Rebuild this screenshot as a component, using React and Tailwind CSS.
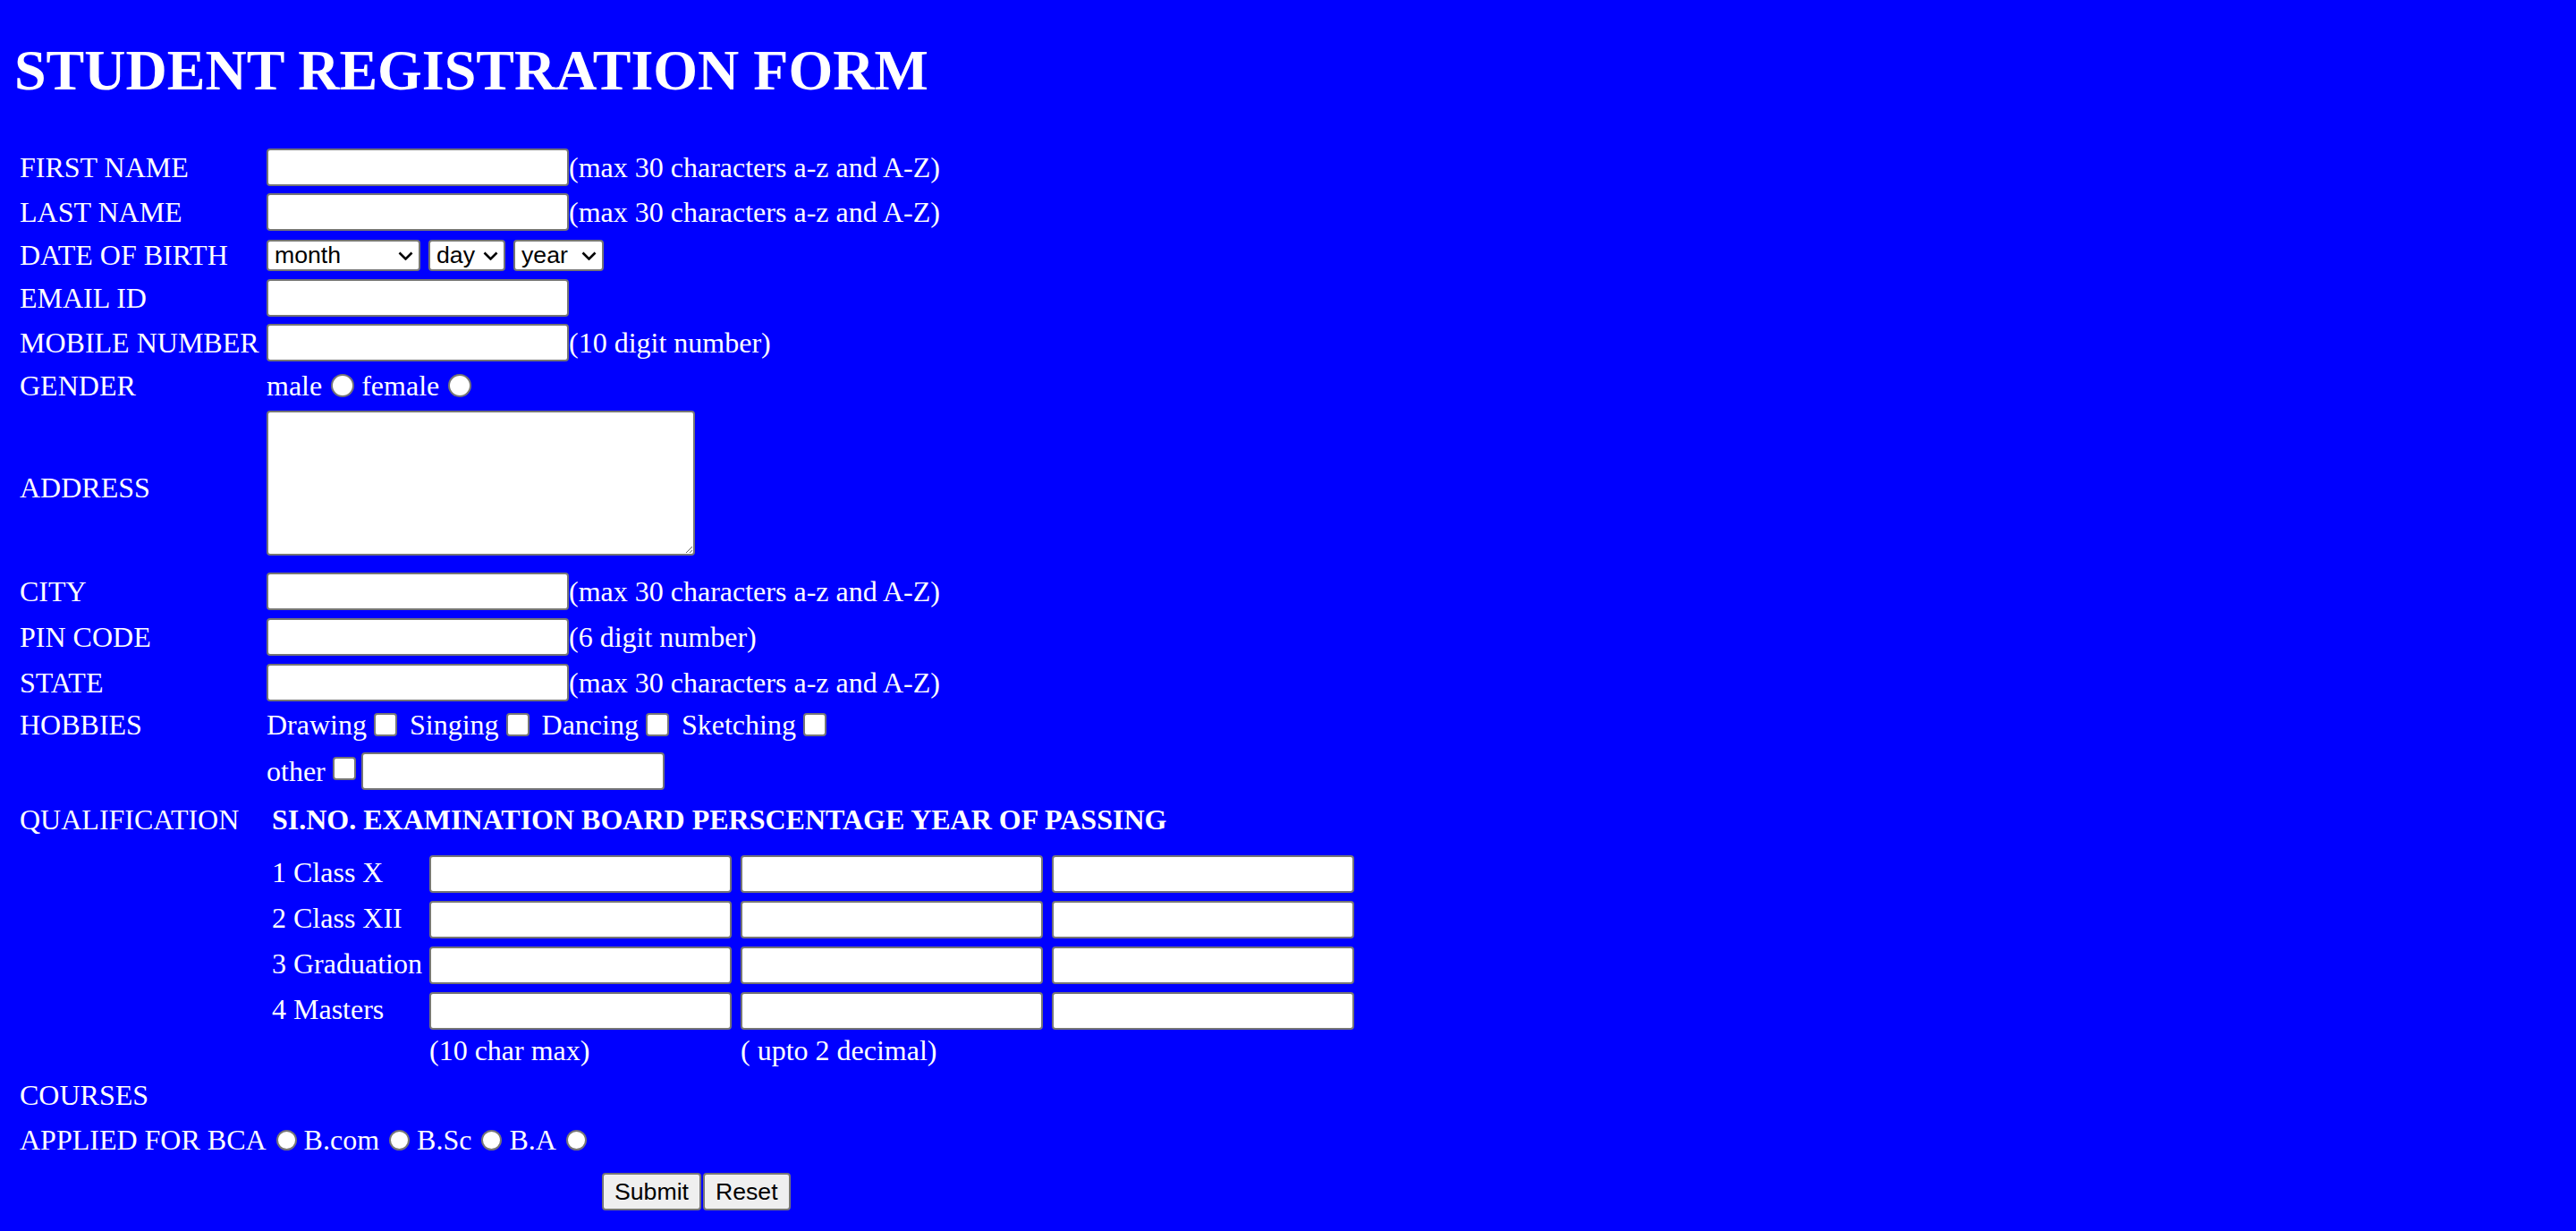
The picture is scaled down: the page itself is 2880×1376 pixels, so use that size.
import React from "react";

const serif = "font-['Liberation_Serif','Times_New_Roman',serif]";
const sans = "font-['Liberation_Sans',Arial,sans-serif]";
const field = "h-[42px] w-[338px] shrink-0 rounded-[4px] border-2 border-[#767676] bg-white text-black";
const radioBig = "appearance-none h-[26px] w-[26px] shrink-0 rounded-full border-2 border-[#767676] bg-white";
const radioSmall = "appearance-none h-[23px] w-[23px] shrink-0 rounded-full border-2 border-[#767676] bg-white";
const checkbox = "appearance-none h-[26px] w-[26px] shrink-0 rounded-[4px] border-2 border-[#767676] bg-white";

function Row({ label, h, className = "", children }) {
  return (
    <div className={`flex items-center ${h} ${className}`}>
      <div className="w-[276px] shrink-0 leading-[36px]">{label}</div>
      {children}
    </div>
  );
}

function Select({ w, label }) {
  return (
    <div className={`relative h-[35px] shrink-0 ${w}`}>
      <select className={`block h-[35px] w-full appearance-none rounded-[4px] border-2 border-[#767676] bg-white pl-[7px] text-[26.67px] leading-[30px] text-black ${sans}`}>
        <option>{label}</option>
      </select>
      <svg className="pointer-events-none absolute right-[8px] top-[13px]" width="17" height="10" viewBox="0 0 17 10">
        <path d="M1.5 1.5 L8.5 8.5 L15.5 1.5" fill="none" stroke="black" strokeWidth="2.6" />
      </svg>
    </div>
  );
}

function Hint({ children }) {
  return <span className="whitespace-nowrap leading-[36px]">{children}</span>;
}

const max30 = "(max 30 characters a-z and A-Z)";

const hobbies = ["Drawing", "Singing", "Dancing", "Sketching"];
const quals = ["1 Class X", "2 Class XII", "3 Graduation", "4 Masters"];
const courses = ["B.com", "B.Sc", "B.A"];

export default function App() {
  return (
    <div className={`min-h-screen bg-[#0000ff] pt-[47px] pl-[16px] text-[32px] text-white ${serif}`}>
      <h1 className="text-[64px] leading-[64px] font-bold whitespace-nowrap">STUDENT REGISTRATION FORM</h1>

      <form className="mt-[53px] flex flex-col pl-[6px]" onSubmit={(e) => e.preventDefault()}>
        <Row label="FIRST NAME" h="h-[46px]">
          <input type="text" className={field} />
          <Hint>{max30}</Hint>
        </Row>
        <Row label="LAST NAME" h="h-[46px]" className="mt-[4px]">
          <input type="text" className={field} />
          <Hint>{max30}</Hint>
        </Row>
        <Row label="DATE OF BIRTH" h="h-[42px]" className="mt-[4px]">
          <div className="flex gap-[9px]">
            <Select w="w-[172px]" label="month" />
            <Select w="w-[86px]" label="day" />
            <Select w="w-[101px]" label="year" />
          </div>
        </Row>
        <Row label="EMAIL ID" h="h-[46px]" className="mt-[4px]">
          <input type="text" className={field} />
        </Row>
        <Row label="MOBILE NUMBER" h="h-[46px]" className="mt-[4px]">
          <input type="text" className={field} />
          <Hint>(10 digit number)</Hint>
        </Row>
        <Row label="GENDER" h="h-[42px]" className="mt-[4px]">
          <span className="leading-[36px]">male</span>
          <input type="radio" name="gender" className={`ml-[10px] mr-[8px] ${radioBig}`} />
          <span className="leading-[36px]">female</span>
          <input type="radio" name="gender" className={`ml-[10px] ${radioBig}`} />
        </Row>
        <Row label="ADDRESS" h="h-[178px]" className="mt-[4px]">
          <textarea className="mb-[11px] h-[162px] w-[479px] shrink-0 rounded-[4px] border-2 border-[#767676] bg-white text-black" />
        </Row>
        <Row label="CITY" h="h-[46px]" className="mt-[4px]">
          <input type="text" className={field} />
          <Hint>{max30}</Hint>
        </Row>
        <Row label="PIN CODE" h="h-[46px]" className="mt-[5px]">
          <input type="text" className={field} />
          <Hint>(6 digit number)</Hint>
        </Row>
        <Row label="STATE" h="h-[46px]" className="mt-[5px]">
          <input type="text" className={field} />
          <Hint>{max30}</Hint>
        </Row>
        <Row label="HOBBIES" h="h-[40px]" className="mt-[4px]">
          {hobbies.map((h, i) => (
            <React.Fragment key={h}>
              <span className="leading-[36px]">{h}</span>
              <input type="checkbox" className={`ml-[8px] ${i < hobbies.length - 1 ? "mr-[14px]" : ""} ${checkbox}`} />
            </React.Fragment>
          ))}
        </Row>
        <Row label="" h="h-[44px]" className="mt-[10px]">
          <span className="leading-[36px]">other</span>
          <input type="checkbox" className={`mb-[6px] ml-[8px] mr-[6px] ${checkbox}`} />
          <input type="text" className="h-[42px] w-[339px] shrink-0 rounded-[4px] border-2 border-[#767676] bg-white text-black" />
        </Row>
        <Row label="QUALIFICATION" h="h-[56px]" className="mt-[4px]">
          <span className="ml-[6px] font-bold whitespace-nowrap leading-[36px]">
            SI.NO. EXAMINATION BOARD PERSCENTAGE YEAR OF PASSING
          </span>
        </Row>

        <div className="mt-[10px] flex flex-col gap-[5px] pl-[282px]">
          {quals.map((q) => (
            <div key={q} className="flex h-[46px] items-center">
              <span className="w-[176px] shrink-0 pb-[5px] leading-[36px] whitespace-nowrap">{q}</span>
              <div className="flex gap-[10px]">
                <input type="text" className={field} />
                <input type="text" className={field} />
                <input type="text" className={field} />
              </div>
            </div>
          ))}
        </div>

        <div className="flex h-[42px] items-center pl-[458px]">
          <span className="w-[348px] shrink-0 leading-[36px]">(10 char max)</span>
          <span className="leading-[36px]">( upto 2 decimal)</span>
        </div>

        <div className="mt-[4px] flex h-[50px] items-center">
          <span className="leading-[36px]">COURSES</span>
        </div>

        <div className="mt-[4px] flex h-[42px] items-center">
          <span className="leading-[36px] whitespace-nowrap">APPLIED FOR BCA</span>
          <input type="radio" name="course" className={`ml-[11px] mr-[8px] ${radioSmall}`} />
          {courses.map((c, i) => (
            <React.Fragment key={c}>
              <span className="leading-[36px]">{c}</span>
              <input type="radio" name="course" className={`ml-[11px] ${i < courses.length - 1 ? "mr-[8px]" : ""} ${radioSmall}`} />
            </React.Fragment>
          ))}
        </div>

        <div className={`mt-[16px] ml-[651px] flex gap-[2px] ${sans}`}>
          <button type="submit" className="h-[42px] rounded-[4px] border-2 border-[#767676] bg-[#efefef] px-[12px] text-[26.67px] leading-[30px] text-black">
            Submit
          </button>
          <button type="reset" className="h-[42px] rounded-[4px] border-2 border-[#767676] bg-[#efefef] px-[12px] text-[26.67px] leading-[30px] text-black">
            Reset
          </button>
        </div>
      </form>
    </div>
  );
}
